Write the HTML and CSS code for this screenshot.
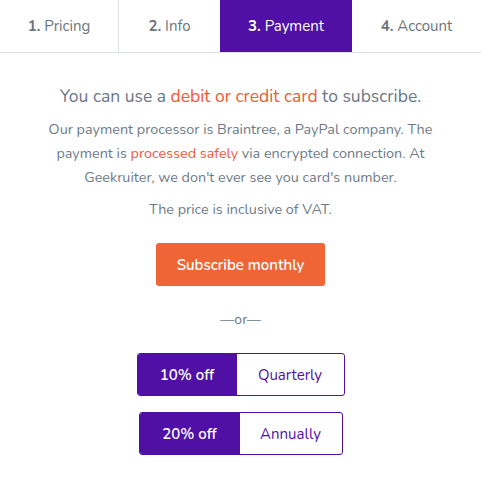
FILE: index.html
```html
<!DOCTYPE html>
<html>
<head>
<meta charset="utf-8">
<link rel="stylesheet" href="styles.css">
</head>
<body>
<nav class="steps">
  <div class="step step-1"><span><b>1.</b> Pricing</span></div>
  <div class="step step-2"><span><b>2.</b> Info</span></div>
  <div class="step step-3 active"><span><b>3.</b> Payment</span></div>
  <div class="step step-4"><span><b>4.</b> Account</span></div>
</nav>
<main class="content">
  <p class="lead">You can use a <span class="hl">debit or credit card</span> to subscribe.</p>
  <p class="text">Our payment processor is Braintree, a PayPal company. The payment is <span class="hl">processed safely</span> via encrypted connection. At Geekruiter, we don't ever see you card's number.</p>
  <p class="text vat">The price is inclusive of VAT.</p>
  <button class="btn-primary">Subscribe monthly</button>
  <div class="or">—or—</div>
  <div class="plan plan-q"><span class="off">10% off</span><span class="period">Quarterly</span></div>
  <div class="plan plan-a"><span class="off">20% off</span><span class="period">Annually</span></div>
</main>
</body>
</html>
```
FILE: styles.css
```css
* { box-sizing: border-box; }
body {
  margin: 0;
  font-family: "Nunito", "Lato", "Open Sans", sans-serif;
  color: #6b7785;
  background: #fff;
}
.steps {
  display: flex;
  border-bottom: 1px solid #dee2e6;
  height: 53px;
}
.step {
  display: flex;
  align-items: center;
  justify-content: center;
  font-size: 15px;
  color: #6c757d;
  height: 52px;
}
.step b { font-weight: 700; }
.step-1 { width: 119px; border-right: 1px solid #dee2e6; }
.step-2 { width: 101px; }
.step-3 { width: 132px; }
.step-4 { width: 129px; }
.step.active { background: #5010a6; color: #fff; }
.content {
  display: flex;
  flex-direction: column;
  align-items: center;
  text-align: center;
  padding: 0 40px;
}
.lead {
  margin: 30px 0 0;
  font-size: 17.5px;
  line-height: 26px;
  color: #6b7785;
}
.hl { color: #f0593a; }
.text {
  margin: 8px 0 0;
  font-size: 14.4px;
  line-height: 24px;
  color: #6e7a88;
}
.vat { margin-top: 8px; }
.btn-primary {
  margin-top: 22px;
  width: 169px;
  height: 43px;
  border: 0;
  border-radius: 3px;
  background: #ef6536;
  color: #fff;
  font-family: inherit;
  font-size: 15px;
  font-weight: 600;
}
.or {
  margin-top: 24px;
  font-size: 14px;
  color: #6b7785;
}
.plan {
  display: flex;
  height: 43px;
  border: 1px solid #5010a6;
  border-radius: 3px;
  overflow: hidden;
  font-size: 15px;
}
.plan-q { margin-top: 24px; width: 208px; }
.plan-a { margin-top: 16px; width: 204px; }
.off {
  display: flex;
  align-items: center;
  justify-content: center;
  background: #5010a6;
  color: #fff;
  font-weight: 600;
}
.period {
  flex: 1;
  display: flex;
  align-items: center;
  justify-content: center;
  color: #5010a6;
}
.plan-q .off { width: 99px; }
.plan-a .off { width: 100px; }
```
